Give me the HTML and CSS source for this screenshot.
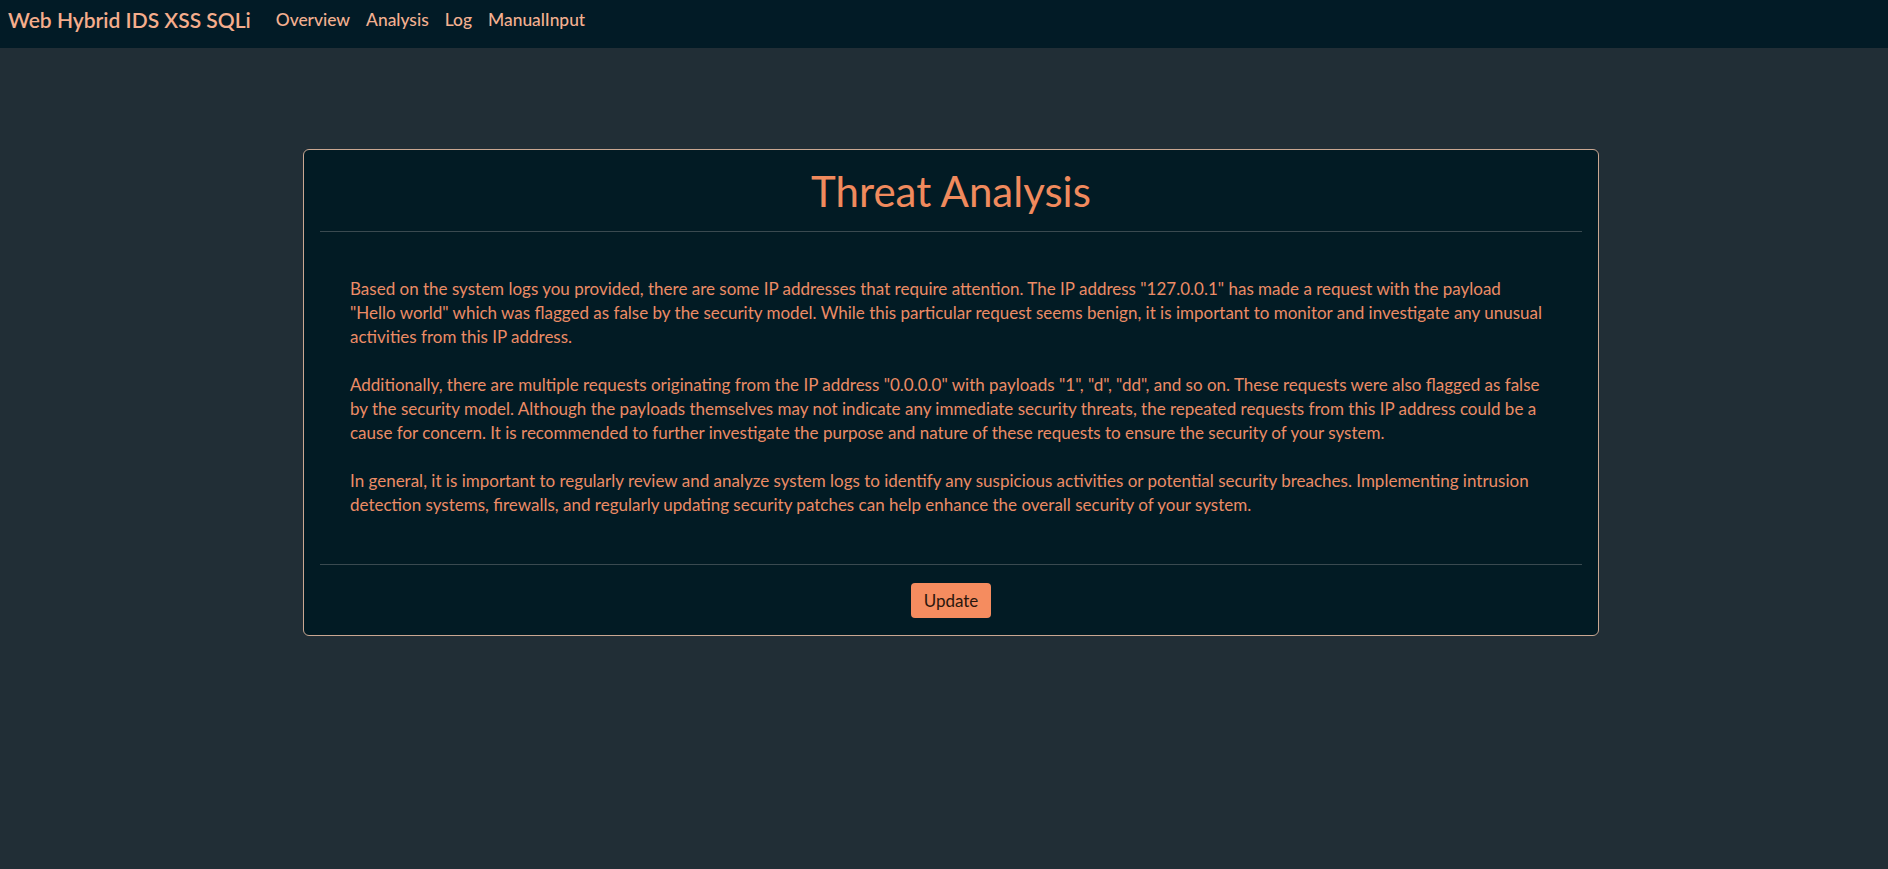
FILE: index.html
```html
<!DOCTYPE html>
<html lang="en">
<head>
<meta charset="utf-8">
<title>Threat Analysis</title>
<link rel="stylesheet" href="styles.css">
</head>
<body>
<nav class="navbar">
  <a class="brand" href="#">Web Hybrid IDS XSS SQLi</a>
  <ul class="nav-links">
    <li><a href="#">Overview</a></li>
    <li><a href="#">Analysis</a></li>
    <li><a href="#">Log</a></li>
    <li><a href="#">ManualInput</a></li>
  </ul>
</nav>
<main class="page">
  <section class="card">
    <header class="card-header">
      <h1 class="card-title">Threat Analysis</h1>
    </header>
    <div class="card-body">
      <p>Based on the system logs you provided, there are some IP addresses that require attention. The IP address "127.0.0.1" has made a request with the payload "Hello world" which was flagged as false by the security model. While this particular request seems benign, it is important to monitor and investigate any unusual activities from this IP address.</p>
      <p>Additionally, there are multiple requests originating from the IP address "0.0.0.0" with payloads "1", "d", "dd", and so on. These requests were also flagged as false by the security model. Although the payloads themselves may not indicate any immediate security threats, the repeated requests from this IP address could be a cause for concern. It is recommended to further investigate the purpose and nature of these requests to ensure the security of your system.</p>
      <p>In general, it is important to regularly review and analyze system logs to identify any suspicious activities or potential security breaches. Implementing intrusion detection systems, firewalls, and regularly updating security patches can help enhance the overall security of your system.</p>
    </div>
    <footer class="card-footer">
      <button class="btn" type="button">Update</button>
    </footer>
  </section>
</main>
</body>
</html>
```

FILE: styles.css
```css
* { box-sizing: border-box; }

html, body {
  margin: 0;
  padding: 0;
}

body {
  background: #212e36;
  font-family: "Lato", "Open Sans", sans-serif;
  color: #ec8c66;
  min-height: 869px;
}

.navbar {
  height: 48px;
  background: #021b26;
  display: flex;
  align-items: flex-start;
  padding: 8px 8px 0;
}

.brand {
  color: #f5ad8c;
  font-size: 21px;
  font-weight: 600;
  line-height: 24px;
  text-decoration: none;
  margin-right: 25px;
  white-space: nowrap;
}

.nav-links {
  list-style: none;
  margin: 0;
  padding: 0;
  display: flex;
  gap: 16px;
}

.nav-links a {
  color: #f3b090;
  font-size: 17.4px;
  font-weight: 500;
  line-height: 24px;
  text-decoration: none;
}

.page {
  padding-top: 101px;
  display: flex;
  justify-content: center;
}

.card {
  width: 1296px;
  margin-left: 14px;
  background: #021b24;
  border: 1px solid #c9a792;
  border-radius: 6px;
  padding: 0 16px;
}

.card-header {
  height: 82px;
  border-bottom: 1px solid #3a4a50;
  display: flex;
  align-items: center;
  justify-content: center;
}

.card-title {
  margin: 0;
  font-weight: 400;
  font-size: 42px;
  color: #f08a5d;
  line-height: 1;
}

.card-body {
  padding: 45px 33px 47px 30px;
}

.card-body p {
  margin: 0 0 24px;
  font-size: 17px;
  line-height: 24px;
}

.card-body p:last-child {
  margin-bottom: 0;
}

.card-footer {
  border-top: 1px solid #3a4a50;
  height: 71px;
  display: flex;
  justify-content: center;
  padding-top: 18px;
}

.btn {
  height: 35px;
  width: 80px;
  background: #f58c5f;
  color: #2a160d;
  border: none;
  border-radius: 4px;
  font-family: inherit;
  font-size: 17px;
  padding: 0;
}
```
